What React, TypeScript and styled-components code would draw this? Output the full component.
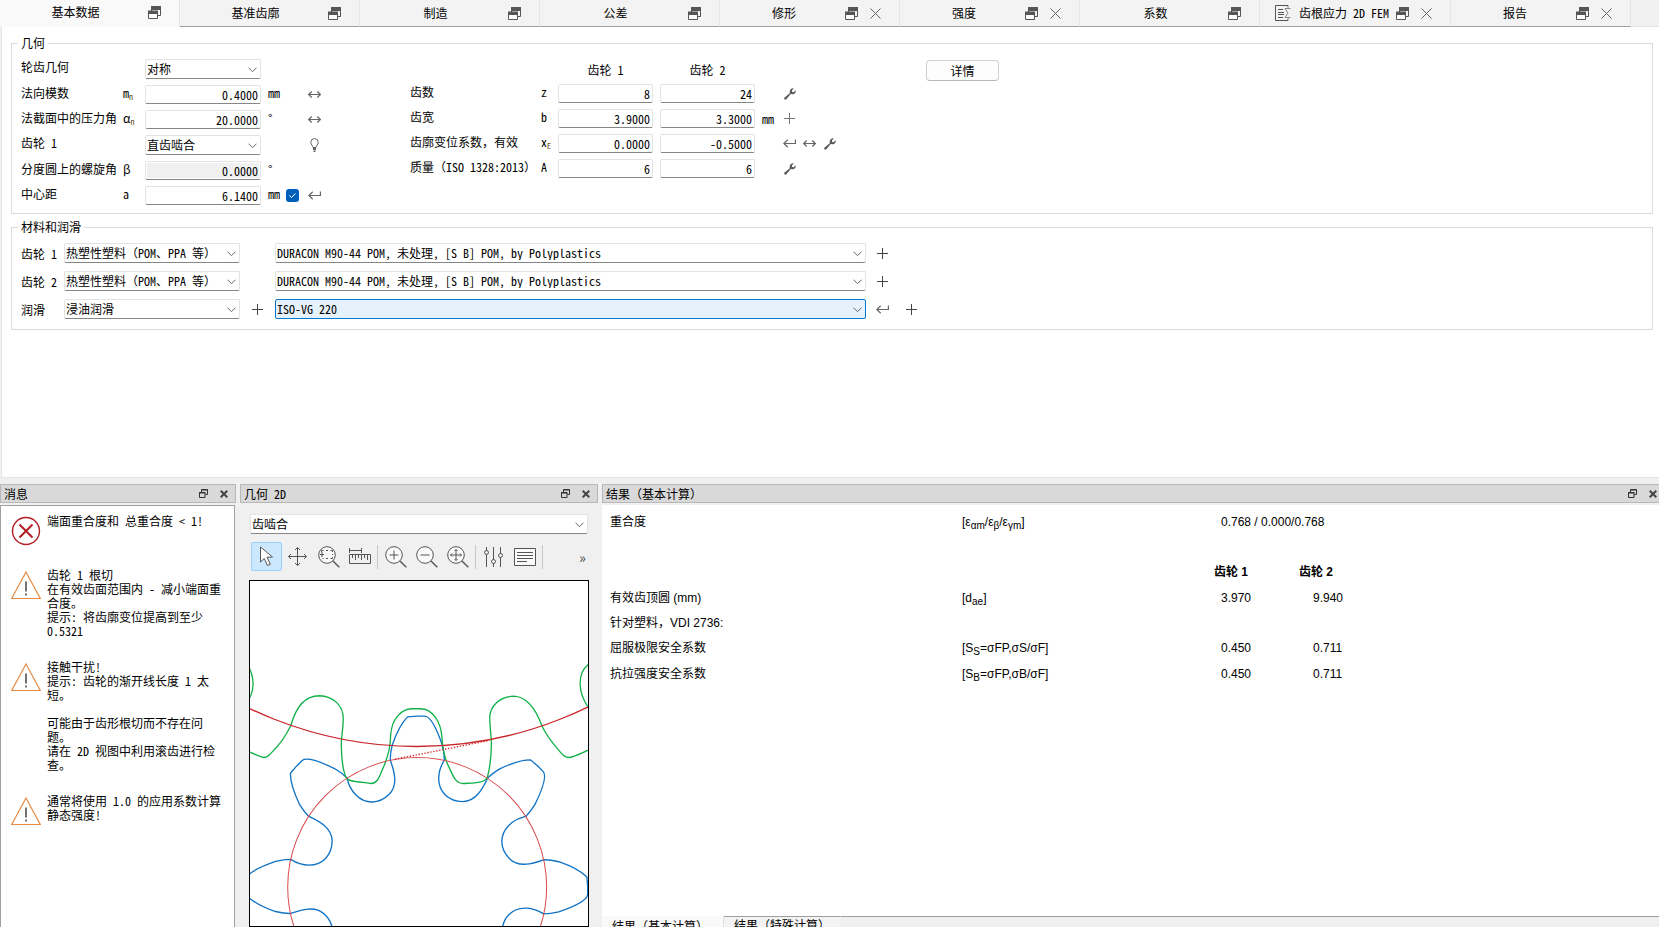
import React from "react";
import styled, { createGlobalStyle, css } from "styled-components";

const uiFont = `"Noto Sans Mono CJK SC", "Noto Sans CJK SC", sans-serif`;
const reportFont = `"Liberation Sans", "Noto Sans CJK SC", sans-serif`;

const GlobalStyle = createGlobalStyle`
  *, *::before, *::after { box-sizing: border-box; }
  body { margin: 0; background: #f0f0f0; color: #000; font: 12px/14px ${uiFont}; overflow: hidden; }
  button, input, select { font: inherit; color: inherit; margin: 0; }
  svg { display: block; }
`;

const Window = styled.div`
  display: flex;
  flex-direction: column;
  height: 100vh;
  min-height: 700px;
  overflow: hidden;
`;

/* ---------- tab strip ---------- */

const TabStrip = styled.nav`
  display: flex;
  flex: none;
  height: 27px;
`;

const TabBox = styled.div<{ $active?: boolean }>`
  display: flex;
  align-items: center;
  flex: 0 1 180px;
  min-width: 0;
  padding: 0 18px ${(p) => (p.$active ? 2 : 0)}px 3px;
  background: ${(p) => (p.$active ? "#f9f9f9" : "#f3f3f3")};
  border-right: 1px solid #e5e5e5;
  border-bottom: 1px solid ${(p) => (p.$active ? "#f9f9f9" : "#9f9f9f")};
`;

const WideTab = styled(TabBox)`
  flex-basis: 191px;
  padding-left: 8px;
`;

const TabFiller = styled.div`
  flex: 1;
  border-bottom: 1px solid #e5e5e5;
`;

const TabLabel = styled.button`
  display: flex;
  flex: 1;
  align-items: center;
  justify-content: center;
  gap: 8px;
  padding: 0;
  border: 0;
  background: none;
  white-space: nowrap;
`;

const IconButton = styled.button<{ $gap?: number; $boxed?: boolean }>`
  display: flex;
  flex: none;
  justify-content: center;
  min-width: ${(p) => (p.$boxed ? 13 : 0)}px;
  padding: 0;
  margin-left: ${(p) => p.$gap ?? 0}px;
  border: 0;
  background: none;
  color: #5a5a5a;
`;

/* ---------- form pane ---------- */

const Pane = styled.main`
  flex: 1;
  min-height: 0;
  margin-left: 1px;
  padding: 7px 6px 0 9px;
  background: #fff;
  border-left: 1px solid #e5e5e5;
  border-bottom: 1px solid #e5e5e5;
`;

const Group = styled.fieldset`
  display: block;
  min-width: 0;
  margin: 0 0 4px;
  padding: 7px 9px 8px;
  border: 1px solid #dcdcdc;
`;

const Legend = styled.legend`
  margin-left: -3px;
  padding: 0 3px;
  line-height: 18px;
`;

const GeometryArea = styled.div`
  display: flex;
  align-items: flex-start;
`;

const BasicGrid = styled.div`
  display: grid;
  grid-template-columns: 102px 22px 116px 25px 22px auto;
  row-gap: 6px;
  width: 389px;
`;

const GearGrid = styled.div`
  display: grid;
  grid-template-columns: 131px 17px 95px 102px auto;
  row-gap: 6px;
  width: 516px;
`;

const Caption = styled.label`
  line-height: 15px;
  white-space: nowrap;
`;

const Sym = styled.span`
  line-height: 15px;
  sub {
    font-size: 8px;
    line-height: 0;
    color: #6b4a20;
    vertical-align: -2px;
  }
`;

const Unit = styled.span`
  padding-left: 7px;
  line-height: 15px;
`;

const HeadLabel = styled.div<{ $second?: boolean }>`
  height: 19px;
  padding-top: 3px;
  padding-left: ${(p) => (p.$second ? 7 : 0)}px;
  line-height: 16px;
  text-align: center;
`;

const GearCell = styled.div<{ $second?: boolean }>`
  display: flex;
  padding-left: ${(p) => (p.$second ? 7 : 0)}px;
`;

const fieldLook = css`
  width: 100%;
  border: 1px solid #e3e3e3;
  border-bottom-color: #868686;
  border-radius: 2px;
  background: #fff;
  outline: 0;
`;

const Field = styled.input`
  ${fieldLook}
  height: 19px;
  padding: 0 2px 1px;
  text-align: right;
  &:read-only {
    background: #f0f0f0;
    box-shadow: inset 0 0 0 1px #fff;
  }
`;

const ComboBox = styled.div`
  position: relative;
  svg {
    position: absolute;
    right: 4px;
    top: 8px;
    pointer-events: none;
  }
`;

const Dropdown = styled.select<{ $focused?: boolean }>`
  ${fieldLook}
  display: block;
  appearance: none;
  height: 20px;
  padding: 0 18px 0 1px;
  ${(p) =>
    p.$focused &&
    css`
      background: #e5f1fb;
      border-color: #0078d4;
    `}
`;

const Actions = styled.div`
  display: flex;
  align-items: center;
  height: 19px;
`;

const GearActions = styled.div`
  display: flex;
  align-items: center;
  height: 19px;
  padding-left: 7px;
`;

const GearUnit = styled.span`
  width: 21px;
`;

const ToolRow = styled.div`
  display: flex;
  align-items: center;
  gap: 7px;
`;

const Tick = styled.input`
  appearance: none;
  width: 13px;
  height: 13px;
  margin: 3px 0 0;
  border: 0;
  border-radius: 3px;
  background: #005fb8;
`;

const TickBox = styled.label`
  position: relative;
  display: block;
  width: 13px;
  height: 19px;
  svg {
    position: absolute;
    left: 0;
    top: 3px;
    pointer-events: none;
  }
`;

const PushButton = styled.button`
  width: 73px;
  height: 21px;
  margin-top: 1px;
  padding: 0;
  border: 1px solid #d0d0d0;
  border-bottom-color: #b8b8b8;
  border-radius: 4px;
  background: #fdfdfd;
`;

const MaterialRows = styled.div`
  display: grid;
  row-gap: 8px;
  padding-bottom: 2px;
`;

const MaterialRow = styled.div`
  display: grid;
  grid-template-columns: 43px 176px 35px 591px auto;
  align-items: center;
`;

const Slot = styled.div`
  display: flex;
  justify-content: center;
`;

const TrailingSlot = styled.div`
  display: flex;
  align-items: center;
  gap: 16px;
  padding-left: 10px;
`;

/* ---------- docks ---------- */

const Docks = styled.div`
  display: flex;
  flex: 0 0 449px;
  min-height: 0;
  padding-top: 6px;
  gap: 4px;
`;

const Dock = styled.section<{ $width?: number }>`
  display: flex;
  flex-direction: column;
  min-width: 0;
  flex: ${(p) => (p.$width ? `0 0 ${p.$width}px` : "1")};
`;

const ResultsDock = styled(Dock)`
  margin-right: -6px;
`;

const DockTitle = styled.header`
  display: flex;
  flex: none;
  align-items: center;
  height: 19px;
  padding: 0 7px 0 3px;
  background: #d9d9d9;
  border: 1px solid #b8b8b8;
`;

const DockName = styled.h2`
  flex: 1;
  margin: 0;
  font: inherit;
`;

const MessageList = styled.ul`
  display: flex;
  flex-direction: column;
  gap: 22px;
  flex: 1;
  margin: 2px 1px 0 0;
  padding: 8px 0 0 10px;
  list-style: none;
  background: #fff;
  border: 1px solid #a0a0a0;
  border-bottom: 0;
`;

const Message = styled.li`
  display: flex;
  min-height: 32px;
  gap: 6px;
  svg { flex: none; margin-top: 2px; }
`;

const MessageText = styled.p`
  margin: 0;
  white-space: pre-line;
`;

const GeometryBody = styled.div`
  display: flex;
  flex-direction: column;
  flex: 1;
  min-height: 0;
  padding: 11px 9px 0;
`;

const ViewPicker = styled.div`
  padding: 0 1px;
`;

const Toolbar = styled.div`
  display: flex;
  align-items: center;
  height: 29px;
  margin: 8px 3px 9px 2px;
`;

const Tool = styled.button<{ $on?: boolean }>`
  display: flex;
  align-items: center;
  justify-content: center;
  width: 31px;
  height: 29px;
  padding: 0;
  border: 1px solid ${(p) => (p.$on ? "#99d1ff" : "transparent")};
  border-radius: 2px;
  background: ${(p) => (p.$on ? "#cce8ff" : "none")};
`;

const Divider = styled.span`
  width: 1px;
  height: 24px;
  margin: 0 2px;
  background: #c8c8c8;
`;

const Overflow = styled.button`
  margin-left: auto;
  padding: 0;
  border: 0;
  background: none;
  color: #444;
  font-size: 14px;
`;

const Canvas = styled.div`
  flex: 1;
  min-height: 0;
  background: #fff;
  border: 1px solid #000;
  overflow: hidden;
`;

const ReportPage = styled.div`
  flex: 1;
  min-height: 0;
  margin-top: 2px;
  padding: 4px 8px 0;
  background: #fff;
  font-family: ${reportFont};
`;

const ReportTable = styled.table`
  border-collapse: collapse;
  table-layout: fixed;
  width: 100%;
  td, th {
    height: 26px;
    padding: 0;
    text-align: left;
    vertical-align: middle;
    white-space: nowrap;
  }
  th { height: 50px; vertical-align: bottom; padding-bottom: 6px; }
  td:nth-child(3) { padding-left: 7px; }
  td:nth-child(4) { padding-left: 14px; }
  sub { font-size: 10px; line-height: 0; vertical-align: -3px; }
`;

const SectionRow = styled.tr`
  && td { height: 24px; }
`;

const Col = styled.col<{ $w?: number }>`
  width: ${(p) => (p.$w ? `${p.$w}px` : "auto")};
`;

const BottomTabs = styled.nav`
  display: flex;
  flex: none;
  height: 11px;
  overflow: hidden;
`;

const BottomTab = styled.button<{ $active?: boolean }>`
  display: flex;
  align-items: flex-start;
  flex: none;
  height: 26px;
  width: ${(p) => (p.$active ? 122 : 117)}px;
  padding: ${(p) => (p.$active ? "2px 0 0 10px" : "0 0 0 10px")};
  border: 0;
  border-top: ${(p) => (p.$active ? "0" : "1px solid #9f9f9f")};
  border-right: 1px solid ${(p) => (p.$active ? "#e0e0e0" : "#f3f3f3")};
  background: ${(p) => (p.$active ? "#f9f9f9" : "#f3f3f3")};
  line-height: 16px;
`;

const BottomRule = styled.span`
  flex: 1;
  border-top: 1px solid #9f9f9f;
`;

/* ---------- icons ---------- */

const RestoreIcon = () => (
  <svg width="13" height="13" viewBox="0 0 13 13" fill="none" stroke="#555">
    <path d="M3 0h10v4H3z" fill="#555" stroke="none" />
    <path d="M12.500 3v6.500H9.500M3.500 3v2" />
    <path d="M.5 5.500h9v7h-9z" fill="#fff" />
    <path d="M0 4.500h10V8H0z" fill="#555" stroke="none" />
  </svg>
);

const CloseIcon = () => (
  <svg width="11" height="11" viewBox="0 0 11 11" fill="none" stroke="#666">
    <path d="M.5 .5l10 10M10.500 .5l-10 10" />
  </svg>
);

const DockFloatIcon = () => (
  <svg width="9" height="9" viewBox="0 0 9 9" fill="none" stroke="#333">
    <path d="M3 1h5.500M2.500 3V.5h6v5H6.500" />
    <path d="M.5 3.500h5.500v5H.5zM0 4h6.500" />
  </svg>
);

const DockCloseIcon = () => (
  <svg width="8" height="8" viewBox="0 0 8 8" fill="none" stroke="#444" strokeWidth="2">
    <path d="M.7 .7l6.600 6.600M7.300 .7L.7 7.300" />
  </svg>
);

const ChevronIcon = () => (
  <svg width="9" height="6" viewBox="0 0 9 6" fill="none" stroke="#666">
    <path d="M.5 .7l4 4 4-4" />
  </svg>
);

const SwapIcon = () => (
  <svg width="13" height="7" viewBox="0 0 13 7" fill="none" stroke="#666" strokeWidth="1.200">
    <path d="M.8 3.500h11.400M3.700 .5l-3 3 3 3M9.300 .5l3 3-3 3" />
  </svg>
);

const ReturnIcon = () => (
  <svg width="13" height="9" viewBox="0 0 13 9" fill="none" stroke="#666" strokeWidth="1.200">
    <path d="M12.400 .5v4H1M4.700 .7L.8 4.500l3.900 3.800" />
  </svg>
);

const BulbIcon = () => (
  <svg width="9" height="14" viewBox="0 0 9 14" fill="none" stroke="#666">
    <path d="M3 9.500C3 7.500 .8 6.800 .8 4.300a3.700 3.700 0 0 1 7.400 0C8.200 6.800 6 7.500 6 9.500z" />
    <path d="M3 11.500h3M3.500 13.300h2M3 10.500h3" strokeWidth="1.300" />
  </svg>
);

const WrenchIcon = () => (
  <svg width="12" height="12" viewBox="0 0 12 12">
    <path
      d="M9.700 .4L7.900 2.400l.3 1.500 1.500.3 1.900-1.900c.7 2-.8 4.200-3.200 3.900L6.700 6 2.400 11.200c-.5.600-1.400.6-1.900.1s-.4-1.300.1-1.800L5.800 5.200C5.100 2.400 7 .1 9.700.4z"
      fill="#5a5a5a"
    />
  </svg>
);

const PlusIcon = ({ tone = "#444" }: { tone?: string }) => (
  <svg width="11" height="11" viewBox="0 0 11 11" fill="none" stroke={tone}>
    <path d="M5.500 0v11M0 5.500h11" />
  </svg>
);

const FemIcon = () => (
  <svg width="16" height="16" viewBox="0 0 16 16" fill="none" stroke="#555">
    <path d="M13 2.500V.5H.5v15H13v-2" />
    <path d="M3 4.500h5M3 7.500h6M3 9.500h6M3 12.500h5" />
    <path d="M15.500 3.500H10l3 4.500-3 4.500h5.500" stroke="#888" />
  </svg>
);

const ErrorIcon = () => (
  <svg width="30" height="30" viewBox="0 0 30 30" fill="none" stroke="#b01f24">
    <circle cx="15" cy="15" r="13.500" strokeWidth="1.400" />
    <path d="M8.500 8.500l13 13M21.500 8.500l-13 13" strokeWidth="2" />
  </svg>
);

const WarningIcon = () => (
  <svg width="30" height="30" viewBox="0 0 30 30" fill="none">
    <path d="M15 2L29.300 28.500H.7z" stroke="#e58a44" strokeWidth="1.200" />
    <path d="M15 11.500v10M15 23.500v2" stroke="#444" strokeWidth="1.500" />
  </svg>
);

const toolSvg = { fill: "none", stroke: "#555" };

const CursorIcon = () => (
  <svg width="16" height="21" viewBox="0 0 16 21" {...toolSvg}>
    <path d="M1.500 1v15l3.800-3.500 3.200 7 2.800-1.200-3.200-7 5.400-.3z" fill="#fff" />
  </svg>
);

const MoveIcon = () => (
  <svg width="19" height="19" viewBox="0 0 19 19" {...toolSvg}>
    <path d="M9.500 .5v18M.5 9.500h18M7 3L9.500 .5 12 3M7 16l2.500 2.500L12 16M3 7L.5 9.500 3 12M16 7l2.500 2.500L16 12" />
  </svg>
);

const Lens = ({ children }: { children: React.ReactNode }) => (
  <svg width="22" height="22" viewBox="0 0 22 22" {...toolSvg}>
    <circle cx="9" cy="9" r="8.300" fill="#fafafa" />
    <path d="M15 15l6.300 6.300" strokeWidth="1.400" />
    {children}
  </svg>
);

const RulerIcon = () => (
  <svg width="22" height="17" viewBox="0 0 22 17" {...toolSvg}>
    <path d="M.5 0v5M12.500 0v5M.5 2.500h12M.5 6.500h21v9H.5z" />
    <path d="M3.500 7v3M6.500 7v5M9.500 7v3M12.500 7v5M15.500 7v3M18.500 7v5" />
  </svg>
);

const SlidersIcon = () => (
  <svg width="19" height="20" viewBox="0 0 19 20" {...toolSvg}>
    <path d="M2.500 0v20M9.500 0v20M16.500 0v20" />
    <circle cx="2.500" cy="5.500" r="2" fill="#eee" />
    <circle cx="9.500" cy="14.500" r="2" fill="#eee" />
    <circle cx="16.500" cy="8.500" r="2" fill="#eee" />
  </svg>
);

const TextIcon = () => (
  <svg width="22" height="18" viewBox="0 0 22 18" {...toolSvg}>
    <path d="M.5 .5h21v17H.5z" fill="#fafafa" />
    <path d="M3 4.500h16M3 7.500h16M3 10.500h16M3 13.500h10" />
  </svg>
);

/* ---------- meshing drawing ---------- */

/* One angular pitch of the 8-tooth pinion, from tip centre to tip centre. */
const pinionPitch =
  "M546.500 438H570C590 440 610 490 622 525C627 545 628 558 628 570C614 592 611 605 611 625C611 665 640 694 683 694C725 694 745 650 757.600 624C766 615 776 607 794 596C827 580 866 569 886 569L908.500 588";

const MeshDrawing = () => (
  <svg width="100%" height="100%" viewBox="45 33 1014 1034" preserveAspectRatio="xMidYMin slice" fill="none" strokeWidth="4">
    <defs>
      <path id="pinion-pitch" d={pinionPitch} />
    </defs>
    <g stroke="#1173c4">
      {[0, 45, 90, 135, 180, 225, 270, 315].map((a) => (
        <use key={a} href="#pinion-pitch" transform={`rotate(${a} 546.500 949)`} />
      ))}
    </g>
    <g stroke="#12b24a">
      <path d="M45 297C58 325 58 355 45 383" />
      <path d="M1059 283C1024 312 1030 370 1059 411" />
      <path d="M45 546C60 552 74 560 87 562C98 562 102 556 115 542C135 523 155 492 168 466C182 415 208 377 253 377C295 379 325 405 325 445C325 480 319 495 319 525C320 570 324 600 333 622C340 631 350 633 362 634C380 635 395 639 408 640C430 640 434 614 446 590C462 550 466 530 467 495C470 445 500 417 530 416H557C590 417 618 450 621 505C623 545 633 575 646 600C656 622 664 640 684 640C715 638 745 640 757 622C765 590 769 560 769 520C768 490 764 470 764 440C766 410 790 380 836 378C880 380 905 425 920 466C935 500 955 522 975 545C985 557 990 562 1003 562C1020 559 1038 549 1059 540" />
    </g>
    <circle cx="546.500" cy="950" r="388" stroke="#d9494b" strokeWidth="3" />
    <circle cx="546.500" cy="-634" r="1163" stroke="#c9252b" />
    <path d="M480 567L757 512" stroke="#d01f26" strokeDasharray="4 5" />
  </svg>
);

/* ---------- screen ---------- */

type TabDef = { name: string; close?: boolean; active?: boolean; icon?: boolean };

const tabs: TabDef[] = [
  { name: "基本数据", active: true },
  { name: "基准齿廓" },
  { name: "制造" },
  { name: "公差" },
  { name: "修形", close: true },
  { name: "强度", close: true },
  { name: "系数" },
  { name: "齿根应力 2D FEM", close: true, icon: true },
  { name: "报告", close: true },
];

const Tab = ({ name, close, active, icon }: TabDef) => {
  const Box = icon ? WideTab : TabBox;
  return (
    <Box $active={active}>
      <TabLabel>
        {icon && <FemIcon />}
        {name}
      </TabLabel>
      <IconButton aria-label="浮动"><RestoreIcon /></IconButton>
      {close && <IconButton $gap={12} aria-label="关闭"><CloseIcon /></IconButton>}
    </Box>
  );
};

type ComboProps = { id: string; value: string; focused?: boolean; label?: string };

const Combo = ({ id, value, focused, label }: ComboProps) => (
  <ComboBox>
    <Dropdown id={id} $focused={focused} aria-label={label}>
      <option>{value}</option>
    </Dropdown>
    <ChevronIcon />
  </ComboBox>
);

const Act = ({ label, children }: { label: string; children: React.ReactNode }) => (
  <IconButton $boxed aria-label={label}>{children}</IconButton>
);

type BasicRowProps = {
  id: string;
  name: string;
  sym?: React.ReactNode;
  unit?: string;
  field: React.ReactNode;
  check?: React.ReactNode;
  action?: React.ReactNode;
};

const BasicRow = ({ id, name, sym, unit, field, check, action }: BasicRowProps) => (
  <>
    <Caption htmlFor={id}>{name}</Caption>
    <Sym>{sym}</Sym>
    {field}
    <Unit>{unit}</Unit>
    <div>{check}</div>
    <Actions>{action}</Actions>
  </>
);

type GearRowProps = {
  id: string;
  name: string;
  sym: React.ReactNode;
  values: [string, string];
  unit?: string;
  children: React.ReactNode;
};

const GearRow = ({ id, name, sym, values, unit, children }: GearRowProps) => (
  <>
    <Caption htmlFor={id}>{name}</Caption>
    <Sym>{sym}</Sym>
    <GearCell><Field id={id} defaultValue={values[0]} /></GearCell>
    <GearCell $second><Field aria-label={`${name} 2`} defaultValue={values[1]} /></GearCell>
    <GearActions>
      <GearUnit>{unit}</GearUnit>
      <ToolRow>{children}</ToolRow>
    </GearActions>
  </>
);

const Title = ({ children }: { children: React.ReactNode }) => (
  <DockTitle>
    <DockName>{children}</DockName>
    <IconButton aria-label="浮动"><DockFloatIcon /></IconButton>
    <IconButton $gap={12} aria-label="关闭"><DockCloseIcon /></IconButton>
  </DockTitle>
);

const messages = [
  { error: true, text: "端面重合度和 总重合度 < 1!" },
  { text: "齿轮 1 根切\n在有效齿面范围内 - 减小端面重\n合度。\n提示: 将齿廓变位提高到至少\n0.5321" },
  { text: "接触干扰!\n提示: 齿轮的渐开线长度 1 太\n短。\n\n可能由于齿形根切而不存在问\n题。\n请在 2D 视图中利用滚齿进行检\n查。" },
  { text: "通常将使用 1.0 的应用系数计算\n静态强度!" },
];

const plastic = "热塑性塑料（POM、PPA 等）";
const duracon = "DURACON M90-44 POM, 未处理, [S B] POM, by Polyplastics";

export default function App() {
  return (
    <Window>
      <GlobalStyle />
      <TabStrip>
        {tabs.map((t) => <Tab key={t.name} {...t} />)}
        <TabFiller />
      </TabStrip>

      <Pane>
        <Group>
          <Legend>几何</Legend>
          <GeometryArea>
            <BasicGrid>
              <BasicRow id="shape" name="轮齿几何" field={<Combo id="shape" value="对称" />} />
              <BasicRow id="mn" name="法向模数" sym={<>m<sub>n</sub></>} unit="mm" field={<Field id="mn" defaultValue="0.4000" />} action={<Act label="换算"><SwapIcon /></Act>} />
              <BasicRow id="an" name="法截面中的压力角" sym={<>α<sub>n</sub></>} unit="°" field={<Field id="an" defaultValue="20.0000" />} action={<Act label="换算"><SwapIcon /></Act>} />
              <BasicRow id="gear1" name="齿轮 1" field={<Combo id="gear1" value="直齿啮合" />} action={<Act label="提示"><BulbIcon /></Act>} />
              <BasicRow id="beta" name="分度圆上的螺旋角" sym="β" unit="°" field={<Field id="beta" defaultValue="0.0000" readOnly />} />
              <BasicRow
                id="a"
                name="中心距"
                sym="a"
                unit="mm"
                field={<Field id="a" defaultValue="6.1400" />}
                check={
                  <TickBox>
                    <Tick type="checkbox" defaultChecked aria-label="固定中心距" />
                    <svg width="13" height="13" viewBox="0 0 13 13" fill="none" stroke="#fff"><path d="M3.500 6.500l2 2 4-4" /></svg>
                  </TickBox>
                }
                action={<Act label="计算"><ReturnIcon /></Act>}
              />
            </BasicGrid>
            <GearGrid>
              <span />
              <span />
              <HeadLabel>齿轮 1</HeadLabel>
              <HeadLabel $second>齿轮 2</HeadLabel>
              <span />
              <GearRow id="z" name="齿数" sym="z" values={["8", "24"]}><Act label="设置"><WrenchIcon /></Act></GearRow>
              <GearRow id="b" name="齿宽" sym="b" values={["3.9000", "3.3000"]} unit="mm"><Act label="添加"><PlusIcon tone="#777" /></Act></GearRow>
              <GearRow id="x" name="齿廓变位系数，有效" sym={<>x<sub>E</sub></>} values={["0.0000", "-0.5000"]}>
                <Act label="计算"><ReturnIcon /></Act>
                <Act label="换算"><SwapIcon /></Act>
                <Act label="设置"><WrenchIcon /></Act>
              </GearRow>
              <GearRow id="q" name="质量（ISO 1328:2013）" sym="A" values={["6", "6"]}><Act label="设置"><WrenchIcon /></Act></GearRow>
            </GearGrid>
            <PushButton>详情</PushButton>
          </GeometryArea>
        </Group>

        <Group>
          <Legend>材料和润滑</Legend>
          <MaterialRows>
            <MaterialRow>
              <Caption htmlFor="m1">齿轮 1</Caption>
              <Combo id="m1" value={plastic} />
              <Slot />
              <Combo id="m1v" value={duracon} label="齿轮 1 材料" />
              <TrailingSlot><Act label="添加"><PlusIcon /></Act></TrailingSlot>
            </MaterialRow>
            <MaterialRow>
              <Caption htmlFor="m2">齿轮 2</Caption>
              <Combo id="m2" value={plastic} />
              <Slot />
              <Combo id="m2v" value={duracon} label="齿轮 2 材料" />
              <TrailingSlot><Act label="添加"><PlusIcon /></Act></TrailingSlot>
            </MaterialRow>
            <MaterialRow>
              <Caption htmlFor="lub">润滑</Caption>
              <Combo id="lub" value="浸油润滑" />
              <Slot><Act label="添加"><PlusIcon /></Act></Slot>
              <Combo id="lubv" value="ISO-VG 220" label="润滑剂" focused />
              <TrailingSlot>
                <Act label="计算"><ReturnIcon /></Act>
                <Act label="添加"><PlusIcon /></Act>
              </TrailingSlot>
            </MaterialRow>
          </MaterialRows>
        </Group>
      </Pane>

      <Docks>
        <Dock $width={236}>
          <Title>消息</Title>
          <MessageList>
            {messages.map((m) => (
              <Message key={m.text}>
                {m.error ? <ErrorIcon /> : <WarningIcon />}
                <MessageText>{m.text}</MessageText>
              </Message>
            ))}
          </MessageList>
        </Dock>

        <Dock $width={358}>
          <Title>几何 2D</Title>
          <GeometryBody>
            <ViewPicker><Combo id="view" value="齿啮合" label="视图" /></ViewPicker>
            <Toolbar>
              <Tool $on aria-label="选择"><CursorIcon /></Tool>
              <Tool aria-label="平移"><MoveIcon /></Tool>
              <Tool aria-label="窗口缩放"><Lens><path d="M3.500 6V4.500h2M12.500 4.500h2V6M14.500 11v1.500h-2M5.500 12.500h-1M8 4.500h2M14.500 8v1M8 12.500h2M4 6v5M2 8.500h4" /></Lens></Tool>
              <Tool aria-label="测量"><RulerIcon /></Tool>
              <Divider />
              <Tool aria-label="放大"><Lens><path d="M9 4.500v9M4.500 9h9" /></Lens></Tool>
              <Tool aria-label="缩小"><Lens><path d="M4.500 9h9" /></Lens></Tool>
              <Tool aria-label="适合窗口"><Lens><path d="M9 3.500v11M3.500 9h11M7.500 5L9 3.500 10.500 5M7.500 13L9 14.500l1.500-1.500M5 7.500L3.500 9 5 10.500M13 7.500L14.500 9 13 10.500" /></Lens></Tool>
              <Divider />
              <Tool aria-label="属性"><SlidersIcon /></Tool>
              <Tool aria-label="文本"><TextIcon /></Tool>
              <Divider />
              <Overflow>»</Overflow>
            </Toolbar>
            <Canvas><MeshDrawing /></Canvas>
          </GeometryBody>
        </Dock>

        <ResultsDock>
          <Title>结果（基本计算）</Title>
          <ReportPage>
            <ReportTable>
              <colgroup>
                <Col $w={352} /><Col $w={252} /><Col $w={85} /><Col />
              </colgroup>
              <tbody>
                <tr>
                  <td>重合度</td>
                  <td>[ε<sub>αm</sub>/ε<sub>β</sub>/ε<sub>γm</sub>]</td>
                  <td colSpan={2}>0.768 / 0.000/0.768</td>
                </tr>
                <tr><th /><th /><th>齿轮 1</th><th>齿轮 2</th></tr>
                <tr><td>有效齿顶圆 (mm)</td><td>[d<sub>ae</sub>]</td><td>3.970</td><td>9.940</td></tr>
                <SectionRow><td colSpan={2}>针对塑料，VDI 2736:</td></SectionRow>
                <tr><td>屈服极限安全系数</td><td>[S<sub>S</sub>=σFP,σS/σF]</td><td>0.450</td><td>0.711</td></tr>
                <tr><td>抗拉强度安全系数</td><td>[S<sub>B</sub>=σFP,σB/σF]</td><td>0.450</td><td>0.711</td></tr>
              </tbody>
            </ReportTable>
          </ReportPage>
          <BottomTabs>
            <BottomTab $active>结果（基本计算）</BottomTab>
            <BottomTab>结果（特殊计算）</BottomTab>
            <BottomRule />
          </BottomTabs>
        </ResultsDock>
      </Docks>
    </Window>
  );
}
